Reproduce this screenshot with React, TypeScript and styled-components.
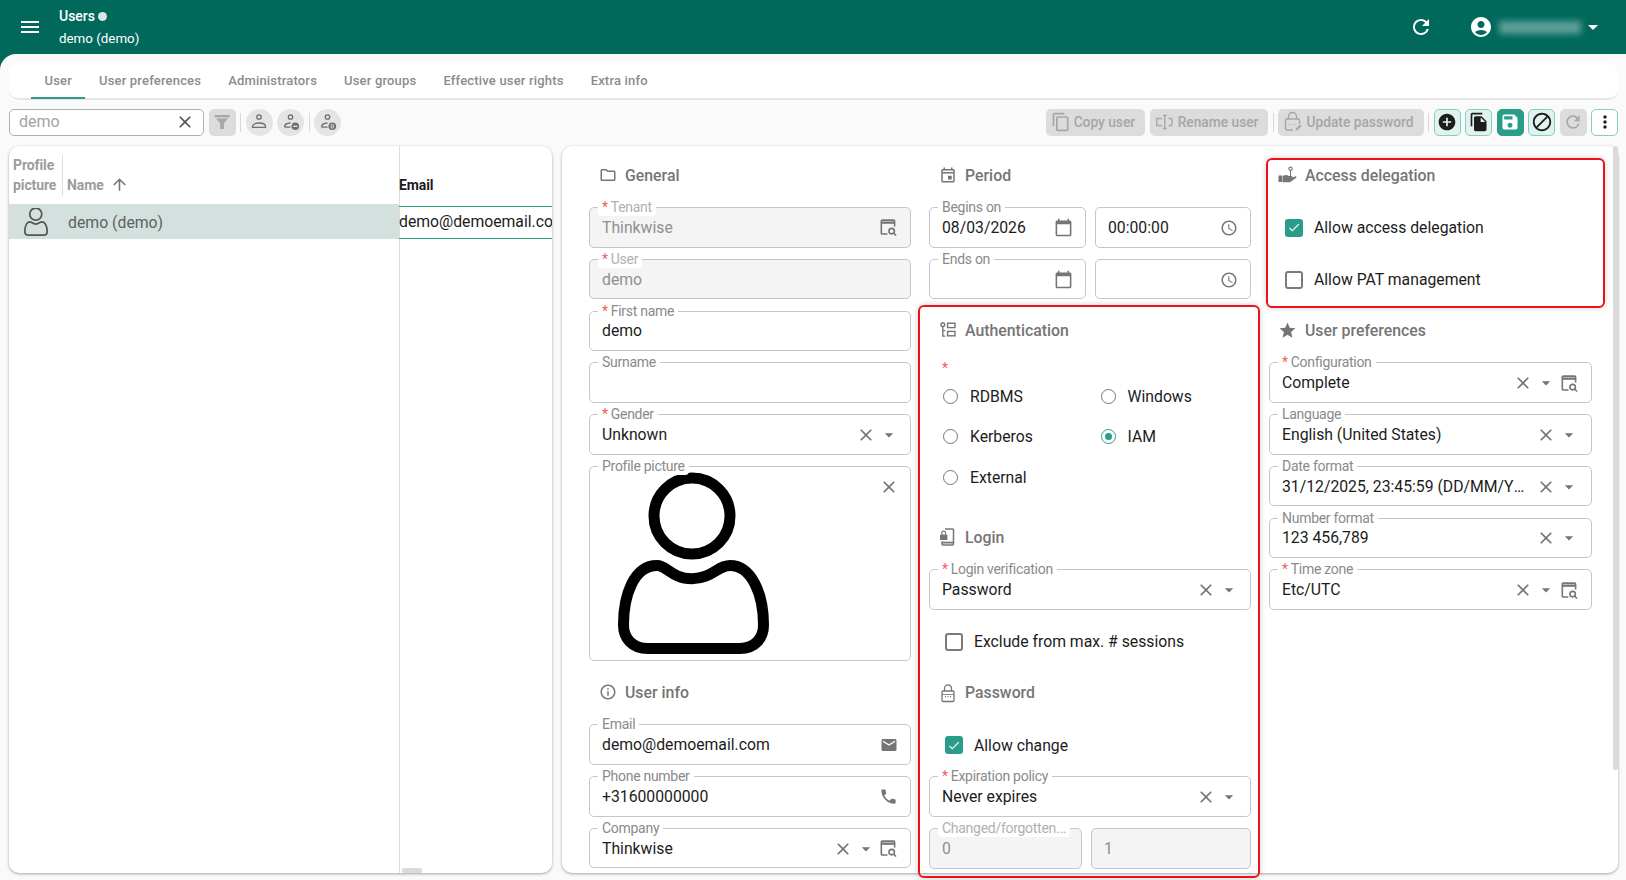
import React from 'react';
import styled, { createGlobalStyle } from 'styled-components';
import {
  MdAccessTime,
  MdAccountCircle,
  MdAddCircle,
  MdArrowDropDown,
  MdArrowUpward,
  MdBlock,
  MdCalendarToday,
  MdCheck,
  MdClose,
  MdContentCopy,
  MdEmail,
  MdFileCopy,
  MdInfoOutline,
  MdMenu,
  MdMoreVert,
  MdOutlineEvent,
  MdOutlineFolder,
  MdPhone,
  MdRefresh,
  MdSave,
  MdStar,
} from 'react-icons/md';

const TEAL = '#2a9d8a';

const GlobalStyle = createGlobalStyle`
  html, body {
    margin: 0;
    padding: 0;
    font-family: Roboto, "Liberation Sans", sans-serif;
    overflow: hidden;
  }
  * { box-sizing: border-box; }
`;

const Page = styled.div`
  width: 1626px;
  height: 880px;
  background: #00695c;
  overflow: hidden;
`;

// ---- top bar
const Header = styled.header`
  height: 54px;
  display: flex;
  align-items: center;
  padding: 0 21px 0 20px;
  color: #fff;
`;

const MenuIcon = styled(MdMenu)`
  width: 24px;
  height: 24px;
  margin-left: -2px;
`;

const HeaderTitles = styled.div`
  margin-left: 17px;
  font-size: 14px;
  line-height: 21px;
  flex: 1;
`;

const HeaderTitle = styled.div`
  display: flex;
  align-items: center;
  gap: 3px;
  font-weight: 500;
`;

const HeaderSubtitle = styled.div`
  font-size: 13.35px;
  margin-top: 1px;
`;

const UnsavedDot = styled.span`
  width: 9px;
  height: 9px;
  border-radius: 50%;
  background: #d4e8e4;
`;

const UserChip = styled.div`
  display: flex;
  align-items: center;
  margin-left: 36px;
`;

const BlurredName = styled.span`
  display: block;
  width: 82px;
  height: 13px;
  margin-left: 6px;
  background: rgba(255, 255, 255, 0.36);
  filter: blur(3px);
`;

// ---- main area
const Main = styled.main`
  height: 826px;
  background: #fafafa;
  border-top-left-radius: 16px;
  padding: 9px 8px 7px 9px;
  display: flex;
  flex-direction: column;
`;

const TabBar = styled.nav`
  height: 37px;
  flex: none;
  display: flex;
  background: #fff;
  border-radius: 10px;
  border-bottom: 2px solid #e6e6e6;
  padding-left: 22px;
`;

const Tab = styled.div<{ $active?: boolean }>`
  height: 36px;
  display: flex;
  align-items: center;
  padding: 0 13.5px;
  font-size: 13px;
  font-weight: 500;
  letter-spacing: 0.18px;
  color: #8c8c8c;
  border-bottom: 2px solid ${(p) => (p.$active ? TEAL : 'transparent')};
`;

const Toolbar = styled.div`
  height: 28px;
  flex: none;
  margin-top: 8px;
  display: flex;
  align-items: center;
  gap: 4.5px;
`;

const SearchBox = styled.div`
  width: 195px;
  height: 27px;
  display: flex;
  align-items: center;
  justify-content: space-between;
  padding: 0 8px 1px 9px;
  border: 1px solid #b0b0b0;
  border-radius: 5px;
  background: #fff;
  font-size: 16px;
  color: #a3a3a3;
`;

const SquareTool = styled.div`
  width: 27px;
  height: 27px;
  border-radius: 5px;
  background: #dcdcdc;
  color: #a8a8a8;
  display: flex;
  align-items: center;
  justify-content: center;
`;

const RoundTool = styled.div`
  width: 27px;
  height: 27px;
  border-radius: 50%;
  background: #e4e4e4;
  color: #6e6e6e;
  display: flex;
  align-items: center;
  justify-content: center;
`;

const ToolSep = styled.span`
  width: 1px;
  height: 19px;
  background: #d8d8d8;
`;

const ToolSpacer = styled.div`
  flex: 1;
`;

const TextButton = styled.div`
  height: 27px;
  display: flex;
  align-items: center;
  gap: 3px;
  padding: 0 10px 0 5px;
  border-radius: 5px;
  background: #dcdcdc;
  color: #a6a6a6;
  font-size: 13.75px;
  font-weight: 500;
`;

const ActionButton = styled.div<{ $kind: 'soft' | 'solid' | 'off' | 'plain' }>`
  width: 27px;
  height: 27px;
  border-radius: 5px;
  display: flex;
  align-items: center;
  justify-content: center;
  border: 1px solid
    ${(p) => (p.$kind === 'solid' ? TEAL : p.$kind === 'off' ? '#dcdcdc' : '#86cfc0')};
  background: ${(p) =>
    p.$kind === 'solid' ? TEAL : p.$kind === 'off' ? '#dcdcdc' : p.$kind === 'soft' ? '#e2f3ef' : '#fff'};
  color: ${(p) => (p.$kind === 'solid' ? '#fff' : p.$kind === 'off' ? '#a8a8a8' : '#1d1d1d')};
`;

// ---- panels
const Panels = styled.div`
  flex: 1;
  min-height: 0;
  margin-top: 10px;
  display: flex;
  gap: 10px;
`;

const Card = styled.section`
  background: #fff;
  border-radius: 10px;
  box-shadow: 0 1px 3px rgba(0, 0, 0, 0.35);
`;

const ListCard = styled(Card)`
  width: 543px;
  flex: none;
  display: flex;
  position: relative;
  overflow: hidden;
`;

const NameColumn = styled.div`
  width: 391px;
  flex: none;
  margin-right: -1px;
  border-right: 1px solid #dedede;
`;

const EmailColumn = styled.div`
  flex: 1;
  min-width: 0;
  overflow: hidden;
`;

const NameHead = styled.div`
  height: 58px;
  display: flex;
  font-size: 14px;
  letter-spacing: -0.1px;
  line-height: 20px;
  font-weight: 700;
  color: #9c9c9c;
`;

const PictureHead = styled.div`
  width: 54px;
  height: 41px;
  margin-top: 9px;
  padding-left: 4px;
  border-right: 1px solid #dedede;
`;

const SortHead = styled.div`
  margin-top: 28.5px;
  margin-left: 4px;
  height: 20px;
  display: flex;
  align-items: center;
  gap: 6px;
`;

const SortArrow = styled(MdArrowUpward)`
  width: 19px;
  height: 19px;
  color: #777;
`;

const NameRow = styled.div`
  height: 35px;
  display: flex;
  align-items: center;
  gap: 20px;
  padding-left: 15px;
  background: #d4e0dd;
  font-size: 15.8px;
  color: #5f5f5f;
`;

const RowText = styled.span`
  padding-top: 2px;
`;

const EmailHead = styled.div`
  height: 58px;
  padding: 28.5px 0 0 0;
  font-size: 14px;
  letter-spacing: -0.1px;
  line-height: 20px;
  font-weight: 700;
  color: #1c1c1c;
`;

const EmailRow = styled.div`
  height: 33px;
  margin-top: 2px;
  padding-bottom: 2px;
  border-top: 1px solid ${TEAL};
  border-bottom: 1px solid ${TEAL};
  display: flex;
  align-items: center;
  font-size: 15.75px;
  color: #1c1c1c;
  white-space: nowrap;
`;

const ScrollThumbX = styled.span`
  position: absolute;
  left: 393px;
  bottom: 0;
  width: 20px;
  height: 5px;
  border-radius: 3px;
  background: #dadada;
`;

const FormCard = styled(Card)`
  flex: 1;
  position: relative;
  padding: 13px 0 0 27px;
  display: grid;
  grid-template-columns: 322px 322px 322.5px;
  column-gap: 18px;
  align-items: start;
`;

const ScrollThumbY = styled.span`
  position: absolute;
  top: 0;
  right: 0;
  width: 5px;
  height: 624px;
  border-radius: 3px;
  background: #dadada;
`;

const Column = styled.div`
  display: flex;
  flex-direction: column;
`;

const Stack = styled.div`
  display: flex;
  flex-direction: column;
  gap: 11.25px;
`;

const HalfRow = styled.div<{ $left?: string }>`
  display: grid;
  grid-template-columns: ${(p) => p.$left || '157px'} 1fr;
  column-gap: 9px;
`;

const Heading = styled.h3`
  margin: 15px 0 16px;
  height: 32px;
  padding-left: 9px;
  display: flex;
  align-items: center;
  gap: 8px;
  font-size: 15.85px;
  font-weight: 500;
  color: #757575;

  &:first-child {
    margin-top: 0;
  }
`;

const HeadingIcon = styled.span`
  width: 19px;
  display: flex;
  align-items: center;
  justify-content: center;
  color: #757575;
`;

const FieldBox = styled.div<{ $disabled?: boolean; $tall?: boolean }>`
  position: relative;
  height: ${(p) => (p.$tall ? '195.5px' : '40.5px')};
  display: flex;
  align-items: ${(p) => (p.$tall ? 'flex-start' : 'center')};
  padding: ${(p) => (p.$tall ? '3px 10px 0 22px' : '1px 10px 0 12px')};
  border: 1px solid #c6c6c6;
  border-radius: 5px;
  background: ${(p) => (p.$disabled ? '#f4f4f4' : '#fff')};
`;

const FieldLabel = styled.label<{ $muted?: boolean }>`
  position: absolute;
  top: -10px;
  left: 8px;
  padding: 0 4px;
  background: #fff;
  border-radius: 4px;
  font-size: 14px;
  letter-spacing: -0.28px;
  line-height: 18px;
  color: ${(p) => (p.$muted ? '#b0b0b0' : '#8a8a8a')};
  white-space: nowrap;
`;

const Star = styled.span`
  color: #f25c5c;
  margin-right: 3px;
`;

const FieldValue = styled.div<{ $muted?: boolean }>`
  flex: 1;
  min-width: 0;
  padding-right: 6px;
  font-size: 15.75px;
  line-height: 20px;
  color: ${(p) => (p.$muted ? '#8f8f8f' : '#1c1c1c')};
  white-space: nowrap;
  overflow: hidden;
  text-overflow: ellipsis;
`;

const FieldIcon = styled.span`
  width: 23px;
  flex: none;
  display: flex;
  align-items: center;
  justify-content: center;
  color: #757575;
`;

const PictureClear = styled(FieldIcon)`
  margin-top: 7px;
`;

const RequiredMark = styled.div`
  height: 20px;
  margin-top: -4px;
  margin-left: 13px;
  font-size: 14px;
  line-height: 20px;
  color: #f25c5c;
`;

const RadioGrid = styled.div`
  display: grid;
  grid-template-columns: 157.5px 1fr;
  row-gap: 0.5px;
  margin-top: -2px;
  padding-left: 14px;
  margin-bottom: 9px;
`;

const RadioItem = styled.div`
  height: 40px;
  display: flex;
  align-items: center;
  gap: 12px;
  font-size: 15.75px;
  color: #1c1c1c;
`;

const RadioDot = styled.span<{ $on?: boolean }>`
  width: 15px;
  height: 15px;
  flex: none;
  border-radius: 50%;
  border: 1.5px solid ${(p) => (p.$on ? TEAL : '#757575')};
  display: flex;
  align-items: center;
  justify-content: center;

  &::after {
    content: '';
    width: 7px;
    height: 7px;
    border-radius: 50%;
    background: ${(p) => (p.$on ? TEAL : 'transparent')};
  }
`;

const CheckRow = styled.div`
  height: 40.5px;
  display: flex;
  align-items: center;
  gap: 11px;
  padding: 1px 0 0 16px;
  font-size: 15.75px;
  color: #1c1c1c;
`;

const CheckBox = styled.span<{ $on?: boolean }>`
  width: 18px;
  height: 18px;
  flex: none;
  border-radius: 3px;
  border: 2px solid ${(p) => (p.$on ? TEAL : '#7b7b7b')};
  background: ${(p) => (p.$on ? TEAL : '#fff')};
  color: #fff;
  display: flex;
  align-items: center;
  justify-content: center;
`;

const RedFrame = styled.div<{ $x: number; $y: number; $w: number; $h: number }>`
  position: absolute;
  left: ${(p) => p.$x}px;
  top: ${(p) => p.$y}px;
  width: ${(p) => p.$w}px;
  height: ${(p) => p.$h}px;
  border: 2px solid #ee1118;
  border-radius: 6px;
  box-shadow: 0 0 6px rgba(0, 0, 0, 0.18);
  pointer-events: none;
`;

// ---- drawn icons
const LookupIcon = () => (
  <svg width="19" height="19" viewBox="0 0 18 18" fill="none" stroke="currentColor" strokeWidth="1.5">
    <path d="M8 15.2H3.2a1 1 0 0 1-1-1V3a1 1 0 0 1 1-1h10.6a1 1 0 0 1 1 1v5" />
    <path d="M2.2 4.4h12.6" strokeWidth="2.2" />
    <circle cx="12" cy="12.4" r="2.6" />
    <path d="M14 14.4l2.2 2.2" />
  </svg>
);

const FunnelIcon = () => (
  <svg width="18" height="18" viewBox="0 0 18 18" fill="currentColor">
    <rect x="1.5" y="2" width="15" height="2.4" />
    <path d="M3 5.6h12l-4 4.6V16H7.2v-5.8z" />
  </svg>
);

const PersonBase = ({ badge }: { badge?: 'minus' | 'zero' }) => (
  <svg width="18" height="18" viewBox="0 0 18 18" fill="none" stroke="currentColor" strokeWidth="1.3">
    <circle cx={badge ? 8.5 : 9} cy="4" r="2.2" />
    {badge ? (
      <path d="M2.5 14.2h6M2.5 13.8c0-2.2 2.4-3.6 6-3.8" />
    ) : (
      <path d="M2.5 14.4h13v-.6c0-2.4-3-3.8-6.5-3.8s-6.5 1.4-6.5 3.8z" />
    )}
    {badge === 'minus' && (
      <>
        <circle cx="13.3" cy="13.3" r="3.8" fill="currentColor" stroke="none" />
        <path d="M11.2 13.3h4.2" stroke="#e4e4e4" />
      </>
    )}
    {badge === 'zero' && (
      <>
        <circle cx="13.3" cy="13.3" r="3.8" fill="currentColor" stroke="none" />
        <rect x="12.2" y="11.4" width="2.2" height="3.8" rx="1" stroke="#e4e4e4" strokeWidth="1" />
      </>
    )}
  </svg>
);

const RenameIcon = () => (
  <svg width="20" height="20" viewBox="0 0 20 20" fill="none" stroke="currentColor" strokeWidth="1.4">
    <path d="M7 6.5H1.8v7H7" />
    <path d="M8 3.5h3.6M9.8 3.5v13M8 16.5h3.6" />
    <path d="M13.5 6.5h3c.8 2 .8 5 0 7h-3" />
  </svg>
);

const LockEditIcon = () => (
  <svg width="20" height="22" viewBox="0 0 20 22" fill="none" stroke="currentColor" strokeWidth="1.4">
    <path d="M5.5 8V5.5a4 4 0 0 1 8 0V8" />
    <path d="M10 19H4a1.5 1.5 0 0 1-1.5-1.5v-8A1.5 1.5 0 0 1 4 8h11a1.5 1.5 0 0 1 1.5 1.5V13" />
    <path d="M5.5 13.5h.8M8.5 13.5h.8M11.5 13.5h.8" />
    <path d="M12.5 19.5l.5-2 4-4 1.5 1.5-4 4z" fill="currentColor" stroke="none" />
  </svg>
);

const AuthIcon = () => (
  <svg width="18" height="18" viewBox="0 0 18 18" fill="none" stroke="currentColor" strokeWidth="1.4">
    <circle cx="3.8" cy="3.6" r="1.9" />
    <path d="M3.8 5.5v9.6h2.4M3.8 9.6h2.4" />
    <rect x="8.6" y="2.2" width="7.4" height="4.4" />
    <rect x="8.6" y="10.4" width="7.4" height="4.4" />
  </svg>
);

const DelegationIcon = () => (
  <svg width="19" height="19" viewBox="0 0 19 19" fill="currentColor">
    <circle cx="12.5" cy="2.8" r="1.7" fill="none" stroke="currentColor" strokeWidth="1.1" />
    <path d="M12 4.5h1v5.5h-1z" />
    <rect x="0.5" y="9.5" width="4" height="6.5" />
    <path d="M5 10c2-1.4 4-1.2 6 0h2.5c1.2 0 1.2 1.6 0 1.8l3.6-1.4c1.2-.3 1.8.9.9 1.6L12 16.2H5z" />
  </svg>
);

const PhoneLockIcon = () => (
  <svg width="18" height="20" viewBox="0 0 18 20" fill="none" stroke="currentColor" strokeWidth="1.5">
    <path d="M6 2h7.5a1 1 0 0 1 1 1v14a1 1 0 0 1-1 1H4a1 1 0 0 1-1-1v-2.5" />
    <path d="M3 15.6h11.5" strokeWidth="1.8" />
    <rect x="1" y="7.5" width="7.4" height="5.6" rx="0.6" fill="currentColor" stroke="none" />
    <path d="M2.8 7.5V6a1.9 1.9 0 0 1 3.8 0v1.5" strokeWidth="1.2" />
  </svg>
);

const LockIcon = () => (
  <svg width="18" height="20" viewBox="0 0 18 20" fill="none" stroke="currentColor" strokeWidth="1.3">
    <path d="M5.5 8V5.4a3.5 3.5 0 0 1 7 0V8" />
    <rect x="3" y="8" width="12" height="10.5" rx="1.2" />
    <path d="M3 11.5h12" strokeWidth="0.9" />
    <path d="M6 13.6h1M8.5 13.6h1M11 13.6h1" />
  </svg>
);

const ProfileFigure = ({ width, height, color, box }: { width: number; height: number; color: string; box: string }) => (
  <svg width={width} height={height} viewBox={box} fill="none" stroke={color} strokeWidth="11">
    <circle cx="80" cy="46" r="38" />
    <path d="M45 95.5C55 95.5 60 108.7 80 108.7S105 95.5 118 95.5C140 95.5 151.5 125 151.5 155C151.5 168 143 178.5 128 178.5H36C20 178.5 11.5 168 11.5 155C11.5 125 22 95.5 45 95.5Z" />
  </svg>
);

// ---- field shorthand
const CLEAR = <MdClose size={20} />;
const CARET = <MdArrowDropDown size={20} />;
const LOOKUP = <LookupIcon />;
const CALENDAR = <MdCalendarToday size={19} />;
const CLOCK = <MdAccessTime size={18} />;

interface FieldProps {
  label?: string;
  value?: string;
  required?: boolean;
  disabled?: boolean;
  icons?: React.ReactNode[];
}

const Field: React.FC<FieldProps> = ({ label, value, required, disabled, icons = [] }) => (
  <FieldBox $disabled={disabled}>
    {label && (
      <FieldLabel $muted={disabled}>
        {required && <Star>*</Star>}
        {label}
      </FieldLabel>
    )}
    <FieldValue $muted={disabled}>{value}</FieldValue>
    {icons.map((icon, i) => (
      <FieldIcon key={i}>{icon}</FieldIcon>
    ))}
  </FieldBox>
);

const Section: React.FC<{ icon: React.ReactNode; title: string }> = ({ icon, title }) => (
  <Heading>
    <HeadingIcon>{icon}</HeadingIcon>
    {title}
  </Heading>
);

const Check: React.FC<{ on?: boolean; label: string }> = ({ on, label }) => (
  <CheckRow>
    <CheckBox $on={on}>{on && <MdCheck size={15} />}</CheckBox>
    {label}
  </CheckRow>
);

const Radio: React.FC<{ on?: boolean; label: string }> = ({ on, label }) => (
  <RadioItem>
    <RadioDot $on={on} />
    {label}
  </RadioItem>
);

const App: React.FC = () => (
  <Page>
    <GlobalStyle />
    <Header>
      <MenuIcon />
      <HeaderTitles>
        <HeaderTitle>
          Users
          <UnsavedDot />
        </HeaderTitle>
        <HeaderSubtitle>demo (demo)</HeaderSubtitle>
      </HeaderTitles>
      <MdRefresh size={24} />
      <UserChip>
        <MdAccountCircle size={24} />
        <BlurredName />
        <MdArrowDropDown size={24} />
      </UserChip>
    </Header>

    <Main>
      <TabBar>
        <Tab $active>User</Tab>
        <Tab>User preferences</Tab>
        <Tab>Administrators</Tab>
        <Tab>User groups</Tab>
        <Tab>Effective user rights</Tab>
        <Tab>Extra info</Tab>
      </TabBar>

      <Toolbar>
        <SearchBox>
          demo
          <MdClose size={20} color="#555" />
        </SearchBox>
        <SquareTool>
          <FunnelIcon />
        </SquareTool>
        <ToolSep />
        <RoundTool>
          <PersonBase />
        </RoundTool>
        <RoundTool>
          <PersonBase badge="minus" />
        </RoundTool>
        <ToolSep />
        <RoundTool>
          <PersonBase badge="zero" />
        </RoundTool>
        <ToolSpacer />
        <TextButton>
          <MdContentCopy size={20} />
          Copy user
        </TextButton>
        <TextButton>
          <RenameIcon />
          Rename user
        </TextButton>
        <ToolSep />
        <TextButton>
          <LockEditIcon />
          Update password
        </TextButton>
        <ToolSep />
        <ActionButton $kind="soft">
          <MdAddCircle size={20} />
        </ActionButton>
        <ActionButton $kind="soft">
          <MdFileCopy size={20} />
        </ActionButton>
        <ActionButton $kind="solid">
          <MdSave size={20} />
        </ActionButton>
        <ActionButton $kind="soft">
          <MdBlock size={22} />
        </ActionButton>
        <ActionButton $kind="off">
          <MdRefresh size={20} />
        </ActionButton>
        <ActionButton $kind="plain">
          <MdMoreVert size={20} />
        </ActionButton>
      </Toolbar>

      <Panels>
        <ListCard>
          <NameColumn>
            <NameHead>
              <PictureHead>
                Profile
                <br />
                picture
              </PictureHead>
              <SortHead>
                Name
                <SortArrow />
              </SortHead>
            </NameHead>
            <NameRow>
              <ProfileFigure width={24} height={28} color="#555" box="6 8 151 176" />
              <RowText>demo (demo)</RowText>
            </NameRow>
          </NameColumn>
          <EmailColumn>
            <EmailHead>Email</EmailHead>
            <EmailRow>demo@demoemail.com</EmailRow>
          </EmailColumn>
          <ScrollThumbX />
        </ListCard>

        <FormCard>
          <Column>
            <Section icon={<MdOutlineFolder size={18} />} title="General" />
            <Stack>
              <Field label="Tenant" required disabled value="Thinkwise" icons={[LOOKUP]} />
              <Field label="User" required disabled value="demo" />
              <Field label="First name" required value="demo" />
              <Field label="Surname" />
              <Field label="Gender" required value="Unknown" icons={[CLEAR, CARET]} />
              <FieldBox $tall>
                <FieldLabel>Profile picture</FieldLabel>
                <ProfileFigure width={160} height={190} color="#000" box="0 0 160 190" />
                <ToolSpacer />
                <PictureClear>
                  <MdClose size={20} />
                </PictureClear>
              </FieldBox>
            </Stack>
            <Section icon={<MdInfoOutline size={18} />} title="User info" />
            <Stack>
              <Field label="Email" value="demo@demoemail.com" icons={[<MdEmail size={18} />]} />
              <Field label="Phone number" value="+31600000000" icons={[<MdPhone size={19} />]} />
              <Field label="Company" value="Thinkwise" icons={[CLEAR, CARET, LOOKUP]} />
            </Stack>
          </Column>

          <Column>
            <Section icon={<MdOutlineEvent size={18} />} title="Period" />
            <Stack>
              <HalfRow>
                <Field label="Begins on" value="08/03/2026" icons={[CALENDAR]} />
                <Field value="00:00:00" icons={[CLOCK]} />
              </HalfRow>
              <HalfRow>
                <Field label="Ends on" icons={[CALENDAR]} />
                <Field icons={[CLOCK]} />
              </HalfRow>
            </Stack>
            <Section icon={<AuthIcon />} title="Authentication" />
            <RequiredMark>*</RequiredMark>
            <RadioGrid>
              <Radio label="RDBMS" />
              <Radio label="Windows" />
              <Radio label="Kerberos" />
              <Radio on label="IAM" />
              <Radio label="External" />
            </RadioGrid>
            <Section icon={<PhoneLockIcon />} title="Login" />
            <Stack>
              <Field label="Login verification" required value="Password" icons={[CLEAR, CARET]} />
              <Check label="Exclude from max. # sessions" />
            </Stack>
            <Section icon={<LockIcon />} title="Password" />
            <Stack>
              <Check on label="Allow change" />
              <Field label="Expiration policy" required value="Never expires" icons={[CLEAR, CARET]} />
              <HalfRow $left="153px">
                <Field label="Changed/forgotten..." disabled value="0" />
                <Field disabled value="1" />
              </HalfRow>
            </Stack>
          </Column>

          <Column>
            <Section icon={<DelegationIcon />} title="Access delegation" />
            <Stack>
              <Check on label="Allow access delegation" />
              <Check label="Allow PAT management" />
            </Stack>
            <Section icon={<MdStar size={21} />} title="User preferences" />
            <Stack>
              <Field label="Configuration" required value="Complete" icons={[CLEAR, CARET, LOOKUP]} />
              <Field label="Language" value="English (United States)" icons={[CLEAR, CARET]} />
              <Field label="Date format" value="31/12/2025, 23:45:59 (DD/MM/YYYY HH:mm:ss)" icons={[CLEAR, CARET]} />
              <Field label="Number format" value="123 456,789" icons={[CLEAR, CARET]} />
              <Field label="Time zone" required value="Etc/UTC" icons={[CLEAR, CARET, LOOKUP]} />
            </Stack>
          </Column>

          <RedFrame $x={356} $y={159} $w={342} $h={573} />
          <RedFrame $x={704} $y={12} $w={339} $h={150} />
          <ScrollThumbY />
        </FormCard>
      </Panels>
    </Main>
  </Page>
);

export default App;
